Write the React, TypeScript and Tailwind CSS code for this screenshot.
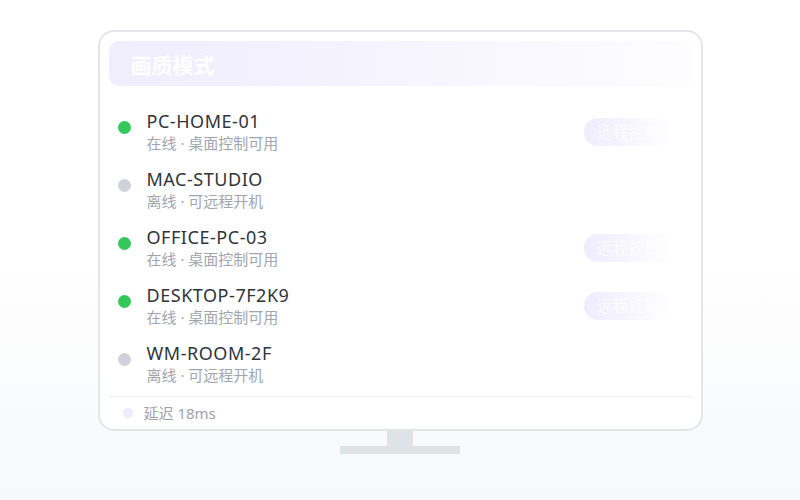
const devices = [
  { name: 'PC-HOME-01', online: true },
  { name: 'MAC-STUDIO', online: false },
  { name: 'OFFICE-PC-03', online: true },
  { name: 'DESKTOP-7F2K9', online: true },
  { name: 'WM-ROOM-2F', online: false },
]

export default function App() {
  return (
    <div
      className="w-[800px] h-[500px] flex flex-col items-center pt-[30px] bg-gradient-to-b from-white via-white to-[#f7f8fa]"
      style={{ fontFamily: '"Noto Sans", "Noto Sans CJK SC", sans-serif' }}
    >
      {/* Monitor */}
      <div className="w-[605px] h-[401px] border-2 border-[#e3e5ea] rounded-[16px] bg-white px-[9px] pt-[9px] flex flex-col">
        <div className="h-[45px] shrink-0 rounded-[10px] bg-gradient-to-r from-[#f0edfd] via-[#f6f4fe] to-[#fdfdff] flex items-center px-[22px] pt-[4px]">
          <span className="text-white text-[21px] font-bold leading-none">画质模式</span>
        </div>

        <div className="mt-[17px] flex flex-col">
          {devices.map((d) => (
            <div key={d.name} className="flex items-start px-[9px] pt-[7px] pb-[8px]">
              <span
                className={`mt-[11px] w-[13px] h-[13px] rounded-full shrink-0 ${d.online ? 'bg-[#34c759]' : 'bg-[#cfd2d8]'}`}
              />
              <div className="ml-[16px] flex-1">
                <div className="text-[18px] leading-[22px] text-[#30343b] tracking-[0.03em]">{d.name}</div>
                <div className="mt-px text-[15px] leading-[20px] text-[#a0a5ae]">
                  {d.online ? '在线 · 桌面控制可用' : '离线 · 可远程开机'}
                </div>
              </div>
              {d.online && (
                <div className="self-center mr-[10px] h-[28px] px-[12px] rounded-full bg-gradient-to-r from-[#efecfd] via-[#f7f5fe] to-white flex items-center">
                  <span className="text-white text-[16px] font-light">远程控制</span>
                </div>
              )}
            </div>
          ))}
        </div>

        <div className="mt-auto border-t border-[#eeeff2] h-[33px] shrink-0 flex items-center px-[14px]">
          <span className="w-[10px] h-[10px] rounded-full bg-[#eeebfd]" />
          <span className="ml-[11px] text-[15px] text-[#9ca1ab]">延迟 18ms</span>
        </div>
      </div>

      {/* Stand */}
      <div className="w-[26px] h-[15px] bg-[#dfe3e8]" />
      <div className="w-[120px] h-[8px] bg-[#dfe3e8]" />
    </div>
  )
}
